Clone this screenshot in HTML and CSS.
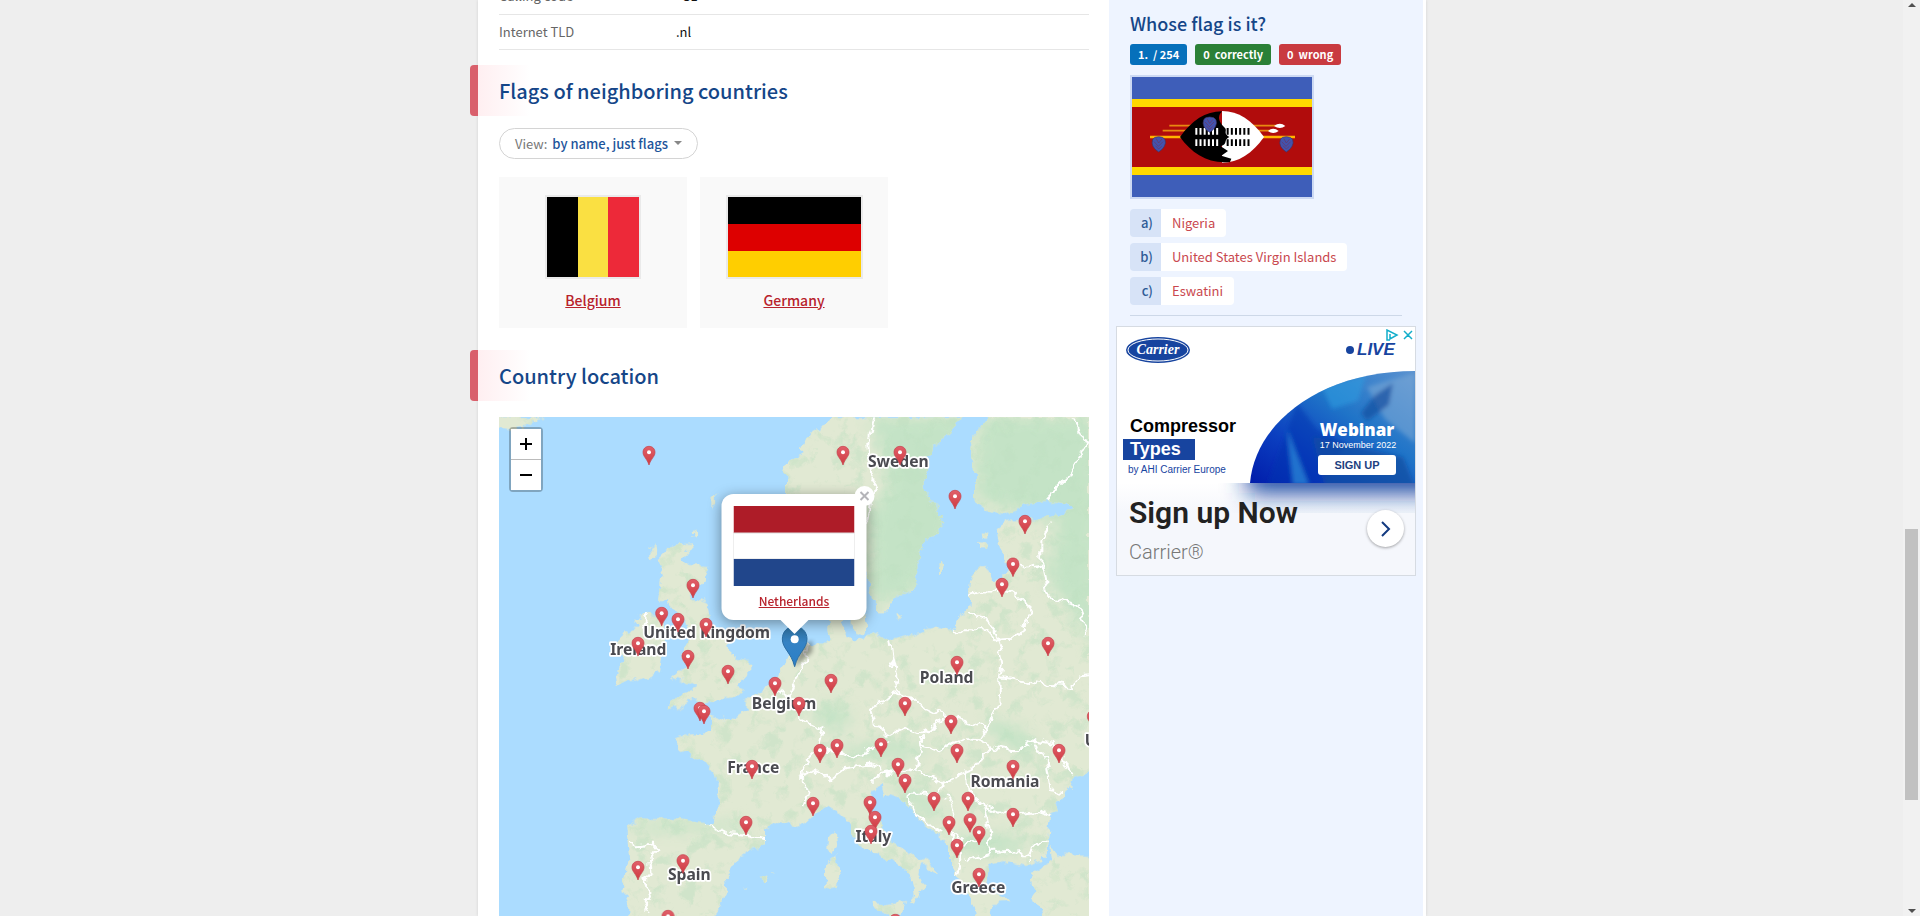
FILE: index.html
```html
<!DOCTYPE html>
<html lang="en">
<head>
<meta charset="utf-8">
<title>Flag of the Netherlands</title>
<link rel="stylesheet" href="styles.css">
</head>
<body>
<div class="page">
  <main class="main">
    <table class="facts">
      <tr><th scope="row">Calling code</th><td>+31</td></tr>
      <tr><th scope="row">Internet TLD</th><td>.nl</td></tr>
    </table>

    <h2 class="heading">Flags of neighboring countries</h2>
    <button class="view" type="button">View: <b>by name, just flags</b><span class="caret"></span></button>
    <ul class="flags">
      <li class="card">
        <svg class="flag" width="92" height="80" viewBox="0 0 92 80"><path d="M0 0h31v80H0z"/><path fill="#fae042" d="M31 0h30v80H31z"/><path fill="#ed2939" d="M61 0h31v80H61z"/></svg>
        <a href="#belgium">Belgium</a>
      </li>
      <li class="card">
        <svg class="flag" width="133" height="80" viewBox="0 0 133 80"><path d="M0 0h133v27H0z"/><path fill="#d00" d="M0 27h133v27H0z"/><path fill="#ffce00" d="M0 54h133v26H0z"/></svg>
        <a href="#germany">Germany</a>
      </li>
    </ul>

    <h2 class="heading">Country location</h2>
    <div class="map">
      <svg class="tiles" viewBox="0 0 1770 1497">
        <defs>
          <filter id="rough" x="0" y="0" width="1770" height="1497" filterUnits="userSpaceOnUse">
            <feTurbulence type="fractalNoise" baseFrequency=".03" numOctaves="3" seed="4" result="n"/>
            <feDisplacementMap in="SourceGraphic" in2="n" scale="36" xChannelSelector="R" yChannelSelector="G"/>
          </filter>
          <filter id="woods" x="0" y="0" width="1770" height="1497" filterUnits="userSpaceOnUse" color-interpolation-filters="sRGB">
            <feTurbulence type="fractalNoise" baseFrequency=".02" numOctaves="5" seed="9"/>
            <feColorMatrix values="0 0 0 0 .75  0 0 0 0 .88  0 0 0 0 .76  5 0 0 0 -2.6"/>
            <feComposite in2="SourceGraphic" operator="in"/>
          </filter>
          <filter id="soft" x="-50%" y="-50%" width="200%" height="200%"><feGaussianBlur stdDeviation="20"/></filter>
          <filter id="shade" x="-50%" y="-50%" width="200%" height="200%"><feGaussianBlur stdDeviation="6"/></filter>
          <linearGradient id="red" x2="0" y2="1"><stop stop-color="#e0606a"/><stop offset="1" stop-color="#cf3a40"/></linearGradient>
          <linearGradient id="blue" x2="0" y2="1"><stop stop-color="#2e6c97"/><stop offset=".4" stop-color="#3583c4"/><stop offset="1" stop-color="#2a7fc9"/></linearGradient>
          <g id="pin"><path fill="url(#red)" stroke="#c4404a" stroke-width="2" d="M0 1C-11 1-18 9-18 19C-18 32-6 38 0 57C6 38 18 32 18 19C18 9 11 1 0 1z"/><circle cy="19" r="6" fill="#fff"/></g>
          <g id="land">
            <path d="M0 0H135L115 12 75 28 35 38 0 32z"/>
            <path d="M1003 0 983 22 923 60 903 109 870 135 858 170 863 220 880 330 920 380 1000 350 1080 440 1104 470 1113 520 1135 580 1173 580 1183 540 1238 525 1258 460V420L1273 380 1313 350 1333 310 1323 280 1283 240 1278 170 1303 90 1353 40 1393 0z"/>
            <path d="M1468 0 1423 60 1413 110 1428 170V250L1473 280 1513 290 1573 265 1638 250 1703 260 1713 280 1653 300 1593 305 1523 315 1493 340 1498 370 1513 420 1528 450 1513 470 1483 490 1463 450H1433L1413 490 1408 570 1363 640 1313 630 1253 645 1173 670 1123 650 1063 675 1035 640 1040 600H980L993 680 933 680 880 695 863 729 843 779 778 824 743 849V879L693 914 633 894 638 949H583L528 964 538 994 613 1029 653 1079V1169L628 1219 533 1209 423 1204 378 1229 388 1329 373 1419 388 1459V1510H633L663 1469 688 1419 683 1379 723 1319 798 1279V1239L828 1209 903 1229 943 1199 983 1169 1033 1199 1073 1269 1123 1309 1203 1349 1243 1389 1253 1429 1228 1454 1248 1454 1273 1409 1258 1369 1263 1339 1318 1374 1313 1349 1233 1309 1173 1269 1143 1209 1108 1149 1113 1114 1153 1101 1163 1139 1213 1149 1273 1219 1323 1259 1353 1289V1349L1388 1399 1418 1459 1430 1510H1475L1483 1459 1530 1452 1463 1409 1473 1349 1513 1329 1573 1345 1633 1329 1643 1289 1653 1199 1703 1124 1723 1079 1790 1059V-20H1468z"/>
            <path d="M1648 1289 1673 1309 1790 1315V1510H1633L1603 1429 1593 1369 1653 1335z"/>
            <path d="M518 384 583 379 553 419 548 439 628 444 613 499 573 539 623 559 638 619 688 669 698 719 748 729V769L713 809 738 819 713 844 613 849 575 852 503 881 548 824 593 814 573 804 518 784 563 739 543 719 573 669 565 630 523 579 510 550 483 549 493 479 473 429z"/>
            <path d="M443 589 493 609 498 669 483 759 413 789 353 804 348 769 383 729 353 679 373 644 415 635 403 604z"/>
            <path d="M450 405 475 388 478 400 455 425zM640 245 655 230 658 250 640 275zM575 345 590 338 588 360 578 362z"/>
            <path d="M985 1335 1015 1315 1022 1370 1012 1410 985 1415 980 1370zM990 1265 1008 1245 1012 1290 1000 1305 988 1290zM1120 1458 1160 1462 1215 1452 1205 1497 1170 1490 1125 1475z"/>
            <path d="M1312 440 1325 430 1330 445 1315 475zM1060 600 1100 595 1105 640 1080 655 1062 640zM1190 595 1205 595 1205 603 1190 603zM775 1385 800 1375 805 1390 790 1398zM735 1412 745 1410 743 1417zM815 1372 832 1375 820 1378zM1440 375 1465 380 1460 400 1440 400zM1445 350 1465 350 1465 365 1448 365z"/>
          </g>
          <mask id="coast" x="0" y="0" width="1770" height="1497" maskUnits="userSpaceOnUse"><use href="#land" fill="#fff"/></mask>
        </defs>
        <path fill="#abdcff" d="M0 0h1770v1497H0z"/>
        <g filter="url(#rough)">
          <use href="#land" fill="#e1e9d3"/>
          <g mask="url(#coast)">
            <g fill="#c4e3c6" filter="url(#soft)">
              <path d="M1110 0H1400V250L1330 400 1240 530 1120 560 1110 300 1170 200z"/>
              <path d="M1440 0H1790V700L1700 560 1640 480 1680 330 1560 280 1430 250z"/>
              <ellipse cx="1540" cy="960" rx="90" ry="30" transform="rotate(30 1540 960)"/>
              <ellipse cx="1160" cy="1000" rx="130" ry="22"/>
              <ellipse cx="1260" cy="1150" rx="90" ry="22" transform="rotate(35 1260 1150)"/>
              <ellipse cx="1470" cy="1280" rx="110" ry="30"/>
              <ellipse cx="560" cy="1230" rx="190" ry="12"/>
              <ellipse cx="1000" cy="900" rx="50" ry="40"/>
            </g>
            <use href="#land" filter="url(#woods)" opacity=".5"/>
            <g fill="none" stroke="#fff" stroke-width="6" stroke-linejoin="round">
              <path d="M1120 0 1105 80 1110 160 1130 190 1110 290 1100 330M1720 0 1765 80 1700 190 1638 250M1650 325 1630 370V440L1640 480 1650 540 1730 560 1770 660M1540 420 1580 455 1630 445M1410 535 1460 520 1540 525 1595 570 1570 640 1540 665 1500 668 1495 645 1460 605 1410 590M1363 640H1470L1495 668 1510 740 1500 780 1505 860 1460 940M1170 670 1180 730 1190 780 1205 830"/>
              <path d="M1500 780 1620 800 1720 810 1740 775 1770 772M1205 830 1115 870 1130 920 1165 960 1210 935 1260 955 1310 930 1350 900M1205 830 1260 860 1320 890 1350 900 1440 920 1460 940 1440 970 1390 965 1320 1000 1270 985 1265 960M1460 940 1440 970 1480 990 1420 1060 1330 1100 1250 1055 1260 1020 1270 985M1480 990 1550 1005 1610 965 1660 975 1700 1040 1715 1075M1605 975 1640 1030 1655 1120 1690 1125M1400 1060 1405 1120 1455 1165 1530 1195 1620 1185 1660 1200M1120 1100 1150 1070 1240 1055M1220 1130 1310 1130 1340 1110 1330 1090M1220 1130 1250 1190 1330 1250M1340 1130 1360 1190 1350 1240 1390 1330 1360 1400M1455 1165 1470 1240 1475 1305 1400 1330M1475 1305 1560 1300 1590 1330 1600 1280 1650 1280M1350 1240 1400 1280 1450 1270"/>
              <path d="M930 680 920 740 890 790 870 850 900 900 970 935 955 1000 910 1050 905 1090 930 1130 915 1170M828 820 870 840M900 1080 950 1060 990 1090 1040 1050 1110 1040 1150 1060M955 1000 1020 1005 1070 1020 1120 995 1170 975M628 1219 680 1245 740 1250 798 1265M390 1275 420 1285 460 1280 475 1300 450 1330 455 1370 435 1390 450 1430 435 1490M445 589 430 640"/>
            </g>
          </g>
        </g>
        <g class="labels" text-anchor="middle">
          <text x="623" y="662">United Kingdom</text><text x="418" y="715">Ireland</text>
          <text x="1198" y="151">Sweden</text><text x="1343" y="799">Poland</text>
          <text x="855" y="877">Belgium</text><text x="763" y="1069">France</text>
          <text x="571" y="1390">Spain</text><text x="1123" y="1274">Italy</text>
          <text x="1518" y="1109">Romania</text><text x="1438" y="1428">Greece</text>
          <text x="1850" y="987">Ukraine</text>
        </g>
        <use href="#pin" x="450" y="87"/><use href="#pin" x="582" y="486"/><use href="#pin" x="488" y="570"/><use href="#pin" x="537" y="588"/><use href="#pin" x="621" y="603"/><use href="#pin" x="417" y="660"/><use href="#pin" x="567" y="699"/>
        <use href="#pin" x="1032" y="87"/><use href="#pin" x="1203" y="87"/><use href="#pin" x="1368" y="219"/><use href="#pin" x="1578" y="294"/><use href="#pin" x="1542" y="422"/><use href="#pin" x="1509" y="483"/><use href="#pin" x="1647" y="660"/><use href="#pin" x="1374" y="717"/>
        <use href="#pin" x="687" y="744"/><use href="#pin" x="828" y="780"/><use href="#pin" x="603" y="855"/><use href="#pin" x="615" y="864"/><use href="#pin" x="759" y="1029"/><use href="#pin" x="741" y="1197"/><use href="#pin" x="552" y="1312"/><use href="#pin" x="417" y="1332"/><use href="#pin" x="507" y="1479"/>
        <use href="#pin" x="900" y="840"/><use href="#pin" x="996" y="771"/><use href="#pin" x="1218" y="840"/><use href="#pin" x="1356" y="894"/><use href="#pin" x="1014" y="966"/><use href="#pin" x="963" y="981"/><use href="#pin" x="1146" y="963"/><use href="#pin" x="1374" y="981"/><use href="#pin" x="1197" y="1023"/><use href="#pin" x="1218" y="1071"/><use href="#pin" x="1542" y="1029"/><use href="#pin" x="1680" y="981"/>
        <use href="#pin" x="1305" y="1125"/><use href="#pin" x="1407" y="1125"/><use href="#pin" x="1542" y="1173"/><use href="#pin" x="942" y="1140"/><use href="#pin" x="1113" y="1137"/><use href="#pin" x="1128" y="1182"/><use href="#pin" x="1116" y="1224"/><use href="#pin" x="1350" y="1197"/><use href="#pin" x="1413" y="1189"/><use href="#pin" x="1440" y="1227"/><use href="#pin" x="1374" y="1266"/><use href="#pin" x="1440" y="1353"/><use href="#pin" x="1189" y="1491"/><use href="#pin" x="1783" y="879"/>
        <path opacity=".35" filter="url(#shade)" d="M887 749 905 690 940 670 940 705z"/>
        <path fill="url(#blue)" stroke="#2b6da3" stroke-width="3" d="M887 628C865 628 850 645 850 666C850 695 876 705 887 749C898 705 924 695 924 666C924 645 909 628 887 628z"/>
        <circle cx="887" cy="667" r="12" fill="#fff"/>
      </svg>
      <div class="zoom"><button type="button" aria-label="Zoom in"><svg width="12" height="12"><path d="M6 0v12M0 6h12"/></svg></button><button type="button" aria-label="Zoom out"><svg width="12" height="12"><path d="M0 6h12"/></svg></button></div>
      <div class="popup">
        <svg width="121" height="80" viewBox="0 0 121 80"><path fill="#ae1c28" d="M0 0h121v27H0z"/><path fill="#fff" stroke="#ddd" d="M0 27h121v26H0z"/><path fill="#21468b" d="M0 53h121v27H0z"/></svg>
        <a href="#netherlands">Netherlands</a>
        <button class="close" type="button" aria-label="Close"><svg width="10" height="10"><path d="M1 1l8 8M9 1l-8 8"/></svg></button>
      </div>
    </div>
  </main>

  <aside class="side">
    <h3 class="quiz-title">Whose flag is it?</h3>
    <div class="badges"><span class="badge">1.&nbsp; / 254</span><span class="badge good">0&nbsp; correctly</span><span class="badge bad">0&nbsp; wrong</span></div>
    <svg class="quiz-flag" width="180" height="120" viewBox="0 0 540 360">
      <path fill="#3e5eb9" d="M0 0h540v360H0z"/><path fill="#ffd900" d="M0 66h540v228H0z"/><path fill="#b10c0c" d="M0 90h540v180H0z"/>
      <path stroke="#e88a10" stroke-width="5" d="M112 146h320M92 161h320"/><path stroke="#ffb400" stroke-width="7" d="M54 180h435"/>
      <path fill="#fff" d="M426 147q18-14 34 0q-16 12-34 0zM408 162q16-14 32 0q-16 12-32 0z"/>
      <path fill="#fff" d="M270 102C320 102 360 130 396 180C360 230 320 257 270 257z"/>
      <path d="M144 180C180 130 220 103 270 103C255 118 260 135 276 150C290 160 270 168 292 180C272 190 290 200 266 208L288 222 268 236 298 245 294 255C230 262 180 230 144 180z"/>
      <path stroke="#fff" stroke-width="20" stroke-dasharray="6 6.500" d="M190 163h70M190 197h70"/><path stroke="#000" stroke-width="20" stroke-dasharray="6 6.500" d="M284 163h72M284 197h72"/>
      <g id="tassel"><path fill="#4353ad" stroke="#3d3568" stroke-width="2" d="M62 188q3-9 18-9t19 9q4 10-2 20-5 10-17 17-12-7-17-17-5-10-1-20z"/><path fill="none" stroke="#6b3560" stroke-width="2" d="M72 184l8 14 10-12M66 194l13 14 14-14M70 206l10 10 9-8"/></g>
      <use href="#tassel" x="383"/><use href="#tassel" x="153" y="-59"/>
    </svg>
    <ol class="answers">
      <li><button type="button"><span class="key">a)</span><span class="value">Nigeria</span></button></li>
      <li><button type="button"><span class="key">b)</span><span class="value">United States Virgin Islands</span></button></li>
      <li><button type="button"><span class="key">c)</span><span class="value">Eswatini</span></button></li>
    </ol>
    <section class="ad">
      <svg class="ad-art" viewBox="0 0 298 186">
        <defs>
          <linearGradient id="sea" x1="0" y1="1" x2="1" y2="0"><stop stop-color="#0019a8"/><stop offset=".3" stop-color="#0b3fc0"/><stop offset=".6" stop-color="#1f74c8"/><stop offset="1" stop-color="#5d93d0"/></linearGradient>
          <linearGradient id="fade" x2="0" y2="1"><stop stop-color="#fff"/><stop offset="1" stop-color="#f5f7fc"/></linearGradient>
          <filter id="glow" x="-50%" y="-100%" width="200%" height="300%"><feGaussianBlur stdDeviation="12"/></filter>
          <filter id="haze"><feGaussianBlur stdDeviation="2"/></filter>
          <clipPath id="dome"><path d="M133 156C138 95 205 44 298 44V156z"/></clipPath>
          <clipPath id="below"><path d="M0 156h298v30H0z"/></clipPath>
        </defs>
        <path fill="#fff" d="M0 0h298v156H0z"/><path fill="url(#fade)" d="M0 156h298v30H0z"/>
        <g clip-path="url(#below)"><path fill="#1742a0" filter="url(#glow)" d="M130 110h220v56H130z"/></g>
        <g clip-path="url(#dome)"><path fill="url(#sea)" d="M130 40h170v120H130z"/>
          <g filter="url(#haze)"><path fill="#0833b0" d="M180 76l20 26 28 14-18 40-60 2z" opacity=".5"/><path fill="#2f9be0" opacity=".6" d="M205 60l44-12-8 26-26 8zM170 102l22 56h-16z"/><path fill="#83add8" opacity=".5" d="M250 60l48-14v70l-30-24z"/><path fill="#154f9f" opacity=".7" d="M244 86l14-18 18-12-4 22-22 16zM196 110l90 20 12 30h-90z"/></g>
        </g>
        <ellipse cx="41" cy="23" rx="32" ry="13" fill="#17449f"/><ellipse cx="41" cy="23" rx="30" ry="11" fill="none" stroke="#fff"/>
        <text class="art-logo" x="41" y="27" text-anchor="middle">Carrier</text>
        <circle cx="233" cy="23" r="4" fill="#17449f"/><text class="art-live" x="240" y="28">LIVE</text>
        <text class="art-head" x="13" y="105">Compressor</text>
        <path fill="#17449f" d="M6 112h72v21H6z"/><text class="art-head art-white" x="13" y="128">Types</text>
        <text class="art-by" x="11" y="146">by AHI Carrier Europe</text>
        <text class="art-web" x="240" y="109" text-anchor="middle">Webinar</text>
        <text class="art-date" x="241" y="121" text-anchor="middle">17 November 2022</text>
        <rect x="201" y="128" width="78" height="20" rx="3" fill="#fff"/><text class="art-sign" x="240" y="142" text-anchor="middle">SIGN UP</text>
      </svg>
      <div class="ad-body">
        <div><a class="ad-title" href="#signup">Sign up Now</a><div class="ad-brand">Carrier®</div></div>
        <button class="ad-go" type="button" aria-label="Open"><svg width="10" height="16"><path d="M1 1l7 7-7 7"/></svg></button>
      </div>
      <div class="ad-choices"><svg width="28" height="12"><path fill="none" stroke="#13aecb" stroke-width="1.500" d="M4 11l-3 0V1l10 5-7 4V5M18 2l8 8M26 2l-8 8"/></svg></div>
    </section>
  </aside>
</div>
<div class="scrollbar"><i class="up"></i><i class="thumb"></i><i class="down"></i></div>
</body>
</html>
```
FILE: styles.css
```css
* { box-sizing: border-box; }
body {
  margin: 0;
  padding-right: 16px;
  height: 100vh;
  overflow: hidden;
  background: #eee;
  font-family: "Noto Sans CJK SC", "Open Sans", sans-serif;
  font-size: 13px;
  color: #111;
}
button { font: inherit; border: 0; padding: 0; margin: 0; background: none; cursor: pointer; }
a { color: #b8222c; }
svg { display: block; }

.page {
  display: flex;
  max-width: 948px;
  min-height: 100vh;
  margin: 0 auto;
  padding-right: 3px;
  background: #fff;
  box-shadow: 0 0 3px rgba(0, 0, 0, .12);
}
.main { flex: 1; min-width: 0; padding: 0 20px 0 21px; }

.facts { width: 100%; margin-top: -21px; border-collapse: collapse; line-height: 20px; }
.facts th, .facts td { height: 35px; padding: 0; border-bottom: 1px solid #e6e6e6; text-align: left; font-weight: 400; }
.facts th { width: 30%; color: #666; }

.heading {
  margin: 15px 0 12px -29px;
  padding-left: 29px;
  background: linear-gradient(90deg, #d9606c 8px, #ffeff1 8px, #fff 60px);
  border-radius: 4px 0 0 4px;
  color: #154688;
  font-size: 20px;
  line-height: 51px;
  font-weight: 500;
}
.view {
  display: flex;
  align-items: center;
  height: 31px;
  padding: 0 15px;
  border: 1px solid #d4d4d4;
  border-radius: 16px;
  color: #777;
}
.view b { margin-left: 5px; font-weight: 500; color: #1d559b; }
.caret { margin-left: 6px; border: 4px solid transparent; border-top-color: #888; border-bottom: 0; }

.flags { display: flex; gap: 13px; margin: 18px 0 22px; padding: 0; list-style: none; }
.card {
  display: flex;
  flex-direction: column;
  align-items: center;
  width: 188px;
  height: 151px;
  padding-top: 18px;
  background: #f9f9f9;
  font-weight: 500;
  font-size: 14px;
  line-height: 22px;
}
.flag { box-sizing: content-box; margin-bottom: 10px; border: 2px solid #eaeaea; }

.map { position: relative; margin-top: 16px; overflow: hidden; }
.tiles { width: 100%; height: auto; }
.labels text {
  font-family: "Noto Sans", "Open Sans", sans-serif;
  font-size: 47px;
  font-weight: 700;
  fill: #4a4a50;
  stroke: #fff;
  stroke-width: 10px;
  stroke-linejoin: round;
  paint-order: stroke;
}
.zoom { position: absolute; left: 10px; top: 10px; border: 2px solid rgba(0, 0, 0, .25); border-radius: 4px; background-clip: padding-box; }
.zoom button { display: grid; place-items: center; width: 30px; height: 30px; background: #fff; stroke: #000; stroke-width: 2px; }
.zoom button:first-child { height: 31px; border-bottom: 1px solid #bbb; }

.popup {
  position: absolute;
  left: 50%;
  top: 77px;
  transform: translateX(-50%);
  padding: 12px;
  height: 126px;
  background: #fff;
  border-radius: 12px;
  box-shadow: 0 3px 14px rgba(0, 0, 0, .4);
  text-align: center;
  font-size: 12px;
  line-height: 30px;
  font-weight: 500;
}
.popup::after {
  content: "";
  position: absolute;
  left: 50%;
  top: 100%;
  transform: translateX(-50%);
  border: 14px solid transparent;
  border-top-color: #fff;
  border-bottom: 0;
}
.close {
  position: absolute;
  right: -8px;
  top: -8px;
  display: grid;
  place-items: center;
  width: 20px;
  height: 20px;
  border-radius: 50%;
  background: #fff;
  stroke: #b4b4b8;
  stroke-width: 2px;
}

.side { width: 314px; padding: 8px 7px 0; background: #eef4ff; }
.quiz-title { margin: 0 14px 6px; color: #154688; font-size: 18px; line-height: 30px; font-weight: 500; }
.badges { display: flex; gap: 8px; margin: 0 14px 10px; }
.badge { padding: 0 8px; border-radius: 3px; background: #0670bb; color: #fff; font-size: 11px; line-height: 21px; font-weight: 700; }
.good { background: #2a8037; }
.bad { background: #c93a40; }
.quiz-flag { box-sizing: content-box; margin: 0 14px 10px; border: 2px solid #ccd9f3; }
.answers { display: grid; gap: 6px; margin: 0 14px 10px; padding: 0 0 10px; border-bottom: 1px solid #cdd8e8; list-style: none; }
.answers button { display: flex; border-radius: 4px; overflow: hidden; line-height: 28px; }
.key { width: 31px; padding-right: 8px; background: #d7e3f7; color: #2f5b96; font-weight: 500; text-align: right; }
.value { padding: 0 11px; background: #fff; color: #c9484e; }

.ad { position: relative; height: 250px; border: 1px solid #d6dbe2; background: #f5f7fc; font-family: Roboto, sans-serif; }
.ad-art { width: 100%; height: auto; }
.art-logo { font: italic 700 14px "Liberation Serif", serif; fill: #fff; }
.art-live { font: italic 700 17px "Liberation Sans", sans-serif; fill: #17449f; }
.art-head { font: 700 18px "Liberation Sans", sans-serif; }
.art-white { fill: #fff; }
.art-by { font: 10px "Liberation Sans", sans-serif; fill: #17449f; }
.art-web { font: 800 17px "Open Sans", sans-serif; fill: #fff; }
.art-date { font: 9px "Liberation Sans", sans-serif; fill: #fff; }
.art-sign { font: 700 11px "Liberation Sans", sans-serif; fill: #1d3f80; }
.ad-body { position: relative; display: flex; justify-content: space-between; align-items: flex-start; margin-top: -20px; padding: 0 11px 0 12px; }
.ad-title { display: block; color: #222; font-size: 30px; line-height: 40px; font-weight: 600; text-decoration: none; }
.ad-brand { color: #777; font-size: 20px; line-height: 38px; font-weight: 300; }
.ad-go { display: grid; place-items: center; width: 37px; height: 37px; margin-top: 17px; border-radius: 50%; background: #fff; box-shadow: 0 1px 3px rgba(0, 0, 0, .35); fill: none; stroke: #123a80; stroke-width: 2px; }
.ad-choices { position: absolute; right: 1px; top: 2px; }

.scrollbar { position: fixed; right: 0; top: 0; bottom: 0; width: 17px; background: #f1f1f1; }
.scrollbar i { position: absolute; left: 5px; border: 4px solid transparent; }
.scrollbar .up { top: 3px; border-bottom-color: #505050; border-top: 0; }
.scrollbar .down { bottom: 3px; border-top-color: #505050; border-bottom: 0; }
.scrollbar .thumb { left: 2px; top: 529px; width: 13px; height: 271px; border: 0; background: #c1c1c1; }
```
